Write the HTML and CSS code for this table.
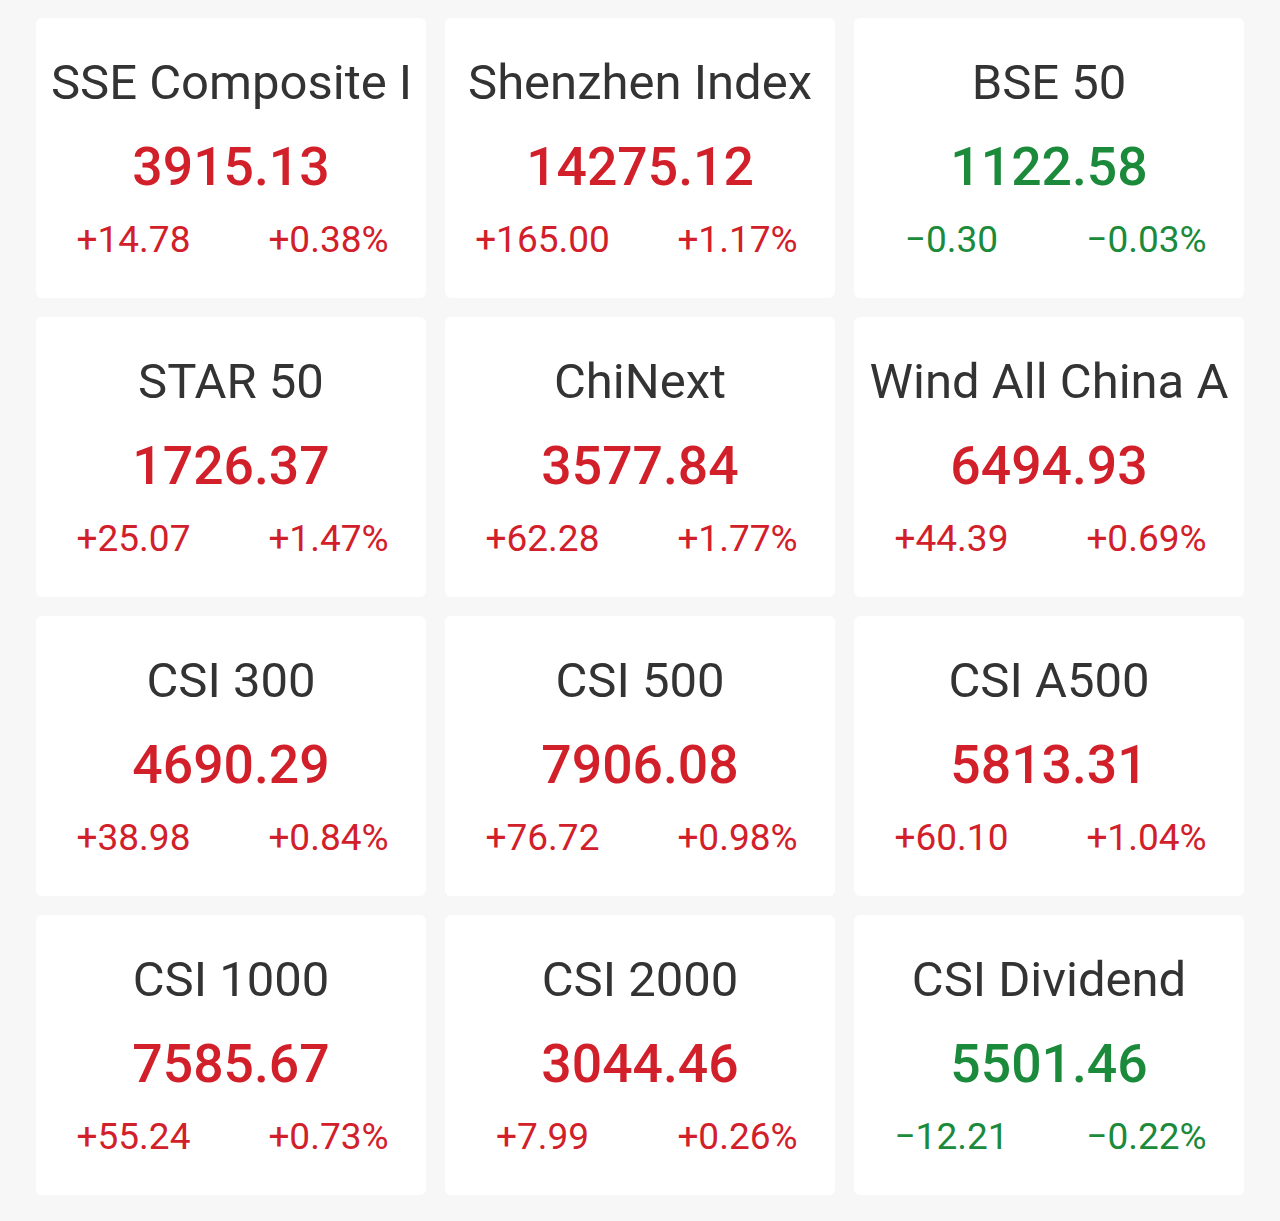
FILE: index.html
```html
<!DOCTYPE html>
<html lang="en">
<head>
<meta charset="utf-8">
<title>Market Indices</title>
<link rel="stylesheet" href="styles.css">
</head>
<body>
<main class="grid">
  <section class="card up">
    <div class="name">SSE Composite Index</div>
    <div class="price">3915.13</div>
    <div class="changes"><span>+14.78</span><span>+0.38%</span></div>
  </section>
  <section class="card up">
    <div class="name">Shenzhen Index</div>
    <div class="price">14275.12</div>
    <div class="changes"><span>+165.00</span><span>+1.17%</span></div>
  </section>
  <section class="card down">
    <div class="name">BSE 50</div>
    <div class="price">1122.58</div>
    <div class="changes"><span>−0.30</span><span>−0.03%</span></div>
  </section>
  <section class="card up">
    <div class="name">STAR 50</div>
    <div class="price">1726.37</div>
    <div class="changes"><span>+25.07</span><span>+1.47%</span></div>
  </section>
  <section class="card up">
    <div class="name">ChiNext</div>
    <div class="price">3577.84</div>
    <div class="changes"><span>+62.28</span><span>+1.77%</span></div>
  </section>
  <section class="card up">
    <div class="name">Wind All China A</div>
    <div class="price">6494.93</div>
    <div class="changes"><span>+44.39</span><span>+0.69%</span></div>
  </section>
  <section class="card up">
    <div class="name">CSI 300</div>
    <div class="price">4690.29</div>
    <div class="changes"><span>+38.98</span><span>+0.84%</span></div>
  </section>
  <section class="card up">
    <div class="name">CSI 500</div>
    <div class="price">7906.08</div>
    <div class="changes"><span>+76.72</span><span>+0.98%</span></div>
  </section>
  <section class="card up">
    <div class="name">CSI A500</div>
    <div class="price">5813.31</div>
    <div class="changes"><span>+60.10</span><span>+1.04%</span></div>
  </section>
  <section class="card up">
    <div class="name">CSI 1000</div>
    <div class="price">7585.67</div>
    <div class="changes"><span>+55.24</span><span>+0.73%</span></div>
  </section>
  <section class="card up">
    <div class="name">CSI 2000</div>
    <div class="price">3044.46</div>
    <div class="changes"><span>+7.99</span><span>+0.26%</span></div>
  </section>
  <section class="card down">
    <div class="name">CSI Dividend</div>
    <div class="price">5501.46</div>
    <div class="changes"><span>−12.21</span><span>−0.22%</span></div>
  </section>
</main>
</body>
</html>
```

FILE: styles.css
```css
html, body {
  margin: 0;
  padding: 0;
  background: #f7f7f7;
}
body {
  font-family: Roboto, "Noto Sans", "Liberation Sans", sans-serif;
  width: 1280px;
  height: 1221px;
  overflow: hidden;
}
.grid {
  display: grid;
  grid-template-columns: repeat(3, 390px);
  grid-auto-rows: 280px;
  column-gap: 19px;
  row-gap: 19px;
  padding: 18px 0 0 36px;
}
.card {
  background: #ffffff;
  border-radius: 6px;
  padding: 0 15px;
  display: flex;
  flex-direction: column;
  align-items: stretch;
  box-sizing: border-box;
}
.name {
  margin-top: 36px;
  height: 58px;
  line-height: 58px;
  font-size: 49px;
  color: #333333;
  text-align: center;
  white-space: nowrap;
  overflow: hidden;
}
.price {
  margin-top: 24px;
  height: 62px;
  line-height: 62px;
  font-size: 53.5px;
  font-weight: 500;
  text-align: center;
}
.changes {
  display: flex;
  margin: 21px -15px 0;
  height: 42px;
  line-height: 42px;
  font-size: 37px;
}
.changes span {
  flex: 1;
  text-align: center;
}
.up .price, .up .changes { color: #d2202b; }
.down .price, .down .changes { color: #1b8a3b; }
```
